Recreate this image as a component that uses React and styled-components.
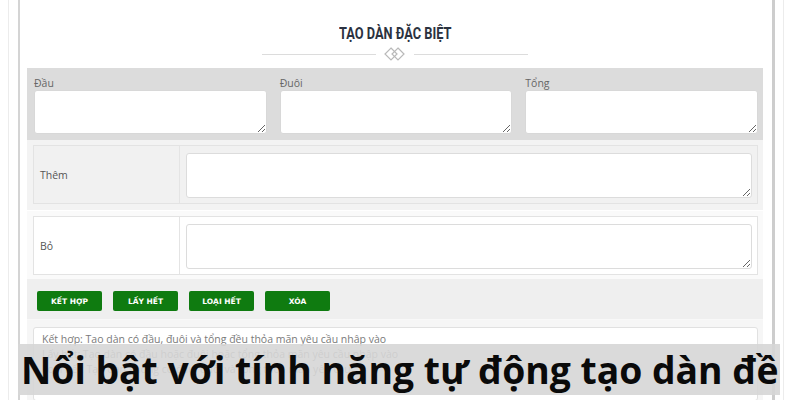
import styled, { createGlobalStyle } from "styled-components";

const GlobalStyle = createGlobalStyle`
  html, body {
    margin: 0;
    padding: 0;
    background: #fff;
    font-family: "Open Sans", "Noto Sans", sans-serif;
  }
  * {
    box-sizing: border-box;
  }
`;

const Page = styled.div`
  position: relative;
  width: 800px;
  height: 400px;
  overflow: hidden;
  background: #fff;
`;

const Frame = styled.div`
  margin: 0 16px 0 8px;
  height: 100%;
  border-left: 1px solid #ececec;
  border-right: 1px solid #ececec;
  padding: 0 8px 0 9px;
`;

const Card = styled.div`
  height: 100%;
  border-left: 2px solid #d4d4d4;
  border-right: 3px solid #cdcdcd;
  padding: 0 9px 0 7px;
  background: #fff;
`;

const Header = styled.header`
  padding-top: 24px;
  height: 68px;
  display: flex;
  flex-direction: column;
  align-items: center;
`;

const Title = styled.h2`
  margin: 0;
  font-family: "Roboto", "Liberation Sans", sans-serif;
  font-weight: 700;
  font-size: 16px;
  line-height: 19px;
  color: #2b3240;
  transform: scaleX(0.8);
  white-space: nowrap;
`;

const Divider = styled.div`
  margin-top: 4px;
  display: flex;
  align-items: center;
  gap: 7px;
  height: 14px;
`;

const Line = styled.span`
  display: block;
  width: 114px;
  height: 1px;
  background: #dcdcdc;
`;

const TopGrid = styled.section`
  background: #dcdcdc;
  padding: 8px 5px 6px 7px;
  display: grid;
  grid-template-columns: 1fr 1fr 1fr;
  column-gap: 13px;
`;

const Field = styled.label`
  display: flex;
  flex-direction: column;
`;

const Label = styled.span`
  font-size: 10.5px;
  line-height: 14px;
  color: #666;
`;

const Area = styled.textarea`
  display: block;
  width: 100%;
  height: ${(p) => p.h || 44}px;
  border: 1px solid ${(p) => (p.soft ? "#dcdcdc" : "#d8d8d8")};
  border-radius: 3px;
  background: #fff;
  resize: vertical;
  font-family: inherit;
  margin: 0;
  outline: none;
`;

const Block = styled.div`
  background: ${(p) => (p.striped ? "#f3f3f3" : "#fafafa")};
  padding: ${(p) => (p.striped ? "5px 5px 6px 6px" : "5px 5px 4px 6px")};
  border-bottom: ${(p) => (p.striped ? "1px solid #fff" : "none")};
`;

const Row = styled.div`
  display: grid;
  grid-template-columns: 146px 1fr;
  border: 1px solid #e3e3e3;
  background: ${(p) => (p.striped ? "#f1f1f1" : "#fff")};
`;

const RowLabel = styled.div`
  display: flex;
  align-items: center;
  padding-left: 6px;
  border-right: 1px solid #e4e4e4;
  font-size: 10.5px;
  color: #555;
`;

const RowCell = styled.div`
  padding: 7px 5px 5px 6px;
`;

const Actions = styled.div`
  background: #efefef;
  height: 41px;
  padding: 12px 0 0 10px;
  display: flex;
  gap: 11px;
  border-bottom: 1px solid #f8f8f8;
`;

const Button = styled.button`
  width: 65px;
  height: 20px;
  border: none;
  border-radius: 2px;
  background: #0f7b10;
  color: #fff;
  font-family: "DejaVu Sans", "Liberation Sans", sans-serif;
  font-weight: 700;
  font-size: 7.5px;
  text-transform: uppercase;
  padding: 0;
  cursor: pointer;
`;

const Notes = styled.div`
  background: #f6f6f6;
  padding: 7px 5px 0 6px;
  height: 100px;
`;

const NoteBox = styled.div`
  height: 74px;
  background: #fff;
  border: 1px solid #e1e1e1;
  border-radius: 3px;
  padding: 4px 8px;
  font-size: 10.5px;
  line-height: 15px;
  color: #7a7a7a;
  white-space: nowrap;
`;

const Banner = styled.div`
  position: absolute;
  left: 18px;
  top: 344px;
  width: 762px;
  height: 51px;
  background: rgba(214, 214, 214, 0.9);
  display: flex;
  align-items: center;
  padding-left: 3px;
  overflow: hidden;
`;

const BannerText = styled.h1`
  margin: 0;
  font-family: "Open Sans", "Noto Sans", sans-serif;
  font-weight: 700;
  font-size: 37.3px;
  line-height: 51px;
  color: #0a0a0a;
  white-space: nowrap;
`;

const Diamonds = () => (
  <svg width="24" height="14" viewBox="0 0 24 14" fill="none" stroke="#b9b9b9" strokeWidth="1.2">
    <path d="M8 1 L14 7 L8 13 L2 7 Z" />
    <path d="M15 1 L21 7 L15 13 L9 7 Z" />
  </svg>
);

const fields = ["Đầu", "Đuôi", "Tổng"];
const buttons = ["Kết hợp", "Lấy hết", "Loại hết", "Xóa"];
const notes = [
  "Kết hợp: Tạo dàn có đầu, đuôi và tổng đều thỏa mãn yêu cầu nhập vào",
  "Lấy hết: Tạo dàn có đầu hoặc đuôi hoặc tổng thỏa mãn yêu cầu nhập vào",
  "Loại hết: Tạo dàn không có đầu, đuôi và tổng thỏa mãn yêu cầu",
];

const App = () => {
  return (
    <Page>
      <GlobalStyle />
      <Frame>
        <Card>
          <Header>
            <Title>TẠO DÀN ĐẶC BIỆT</Title>
            <Divider>
              <Line />
              <Diamonds />
              <Line />
            </Divider>
          </Header>

          <TopGrid>
            {fields.map((f) => (
              <Field key={f}>
                <Label>{f}</Label>
                <Area />
              </Field>
            ))}
          </TopGrid>

          <Block striped>
            <Row striped>
              <RowLabel>Thêm</RowLabel>
              <RowCell>
                <Area h={45} soft />
              </RowCell>
            </Row>
          </Block>
          <Block>
            <Row>
              <RowLabel>Bỏ</RowLabel>
              <RowCell>
                <Area h={45} soft />
              </RowCell>
            </Row>
          </Block>

          <Actions>
            {buttons.map((b) => (
              <Button key={b}>{b}</Button>
            ))}
          </Actions>

          <Notes>
            <NoteBox>
              {notes.map((n) => (
                <div key={n}>{n}</div>
              ))}
            </NoteBox>
          </Notes>
        </Card>
      </Frame>
      <Banner>
        <BannerText>Nổi bật với tính năng tự động tạo dàn đề</BannerText>
      </Banner>
    </Page>
  );
};

export default App;
